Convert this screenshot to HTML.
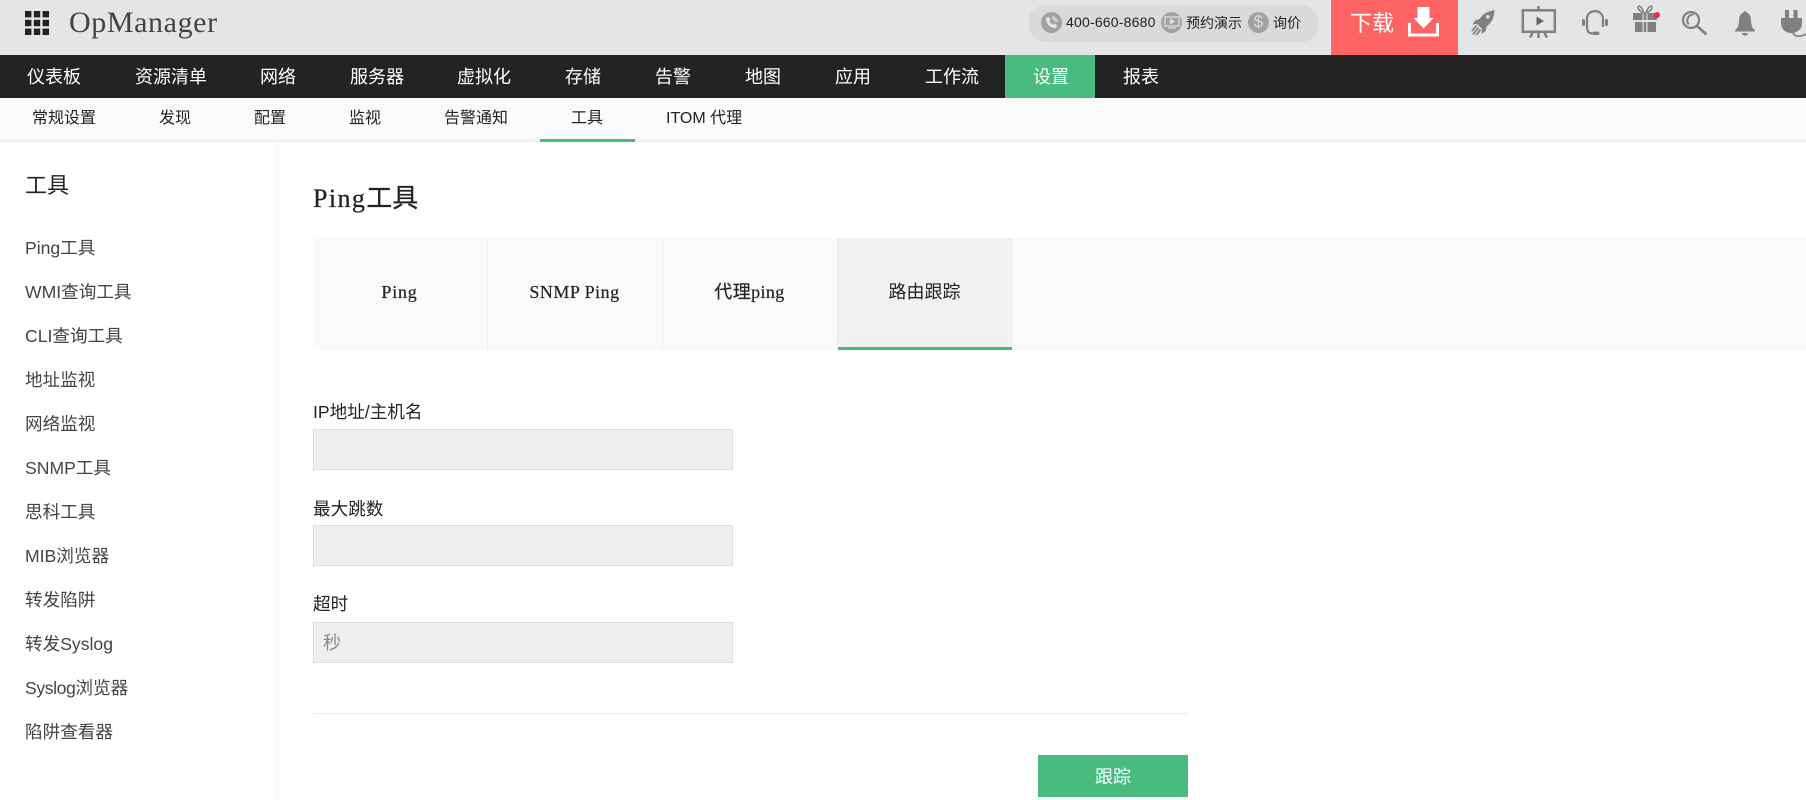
<!DOCTYPE html>
<html lang="zh">
<head>
<meta charset="utf-8">
<title>OpManager</title>
<style>
*{box-sizing:border-box}
html,body{margin:0;padding:0;width:1806px;height:800px;overflow:hidden;background:#fff}
body{position:relative;font-family:"Liberation Sans","Noto Sans CJK SC",sans-serif;color:#222}
.a{position:absolute;white-space:nowrap}
.t{position:absolute;white-space:nowrap;height:30px;line-height:30px}
.serif{font-family:"Liberation Serif","Noto Sans CJK SC",serif}
#top{position:absolute;left:0;top:0;width:1806px;height:55px;background:#e4e5e7}
#nav{position:absolute;left:0;top:55px;width:1806px;height:43px;background:#232323}
#sub{position:absolute;left:0;top:98px;width:1806px;height:44px;background:#fafafa}
#navon{position:absolute;left:1005px;top:55px;width:90px;height:43px;background:#48bb7f}
.n{color:#fff;font-size:18px;top:62px}
.s{color:#222;font-size:16px;top:104px}
.m{color:#444;font-size:17.6px;left:25px}
.l{color:#222;font-size:17.6px;left:313px}
.i{position:absolute;left:313px;width:420px;height:41px;background:#efefef;border:1px solid #ddd}
.tb{font-size:18px;color:#222;text-align:center;width:175px;top:277px;-webkit-text-stroke:.2px #222}
.c{position:absolute;width:21px;height:21px;border-radius:50%;background:#a2a2a2;top:12px}
svg{position:absolute;display:block}
</style>
</head>
<body>
<div id="top"></div>
<svg style="left:25px;top:11px" width="24" height="24" viewBox="0 0 24 24" fill="#222">
<rect x="0" y="0" width="6.4" height="6.4"/><rect x="8.8" y="0" width="6.4" height="6.4"/><rect x="17.6" y="0" width="6.4" height="6.4"/>
<rect x="0" y="8.8" width="6.4" height="6.4"/><rect x="8.8" y="8.8" width="6.4" height="6.4"/><rect x="17.6" y="8.8" width="6.4" height="6.4"/>
<rect x="0" y="17.6" width="6.4" height="6.4"/><rect x="8.8" y="17.6" width="6.4" height="6.4"/><rect x="17.6" y="17.6" width="6.4" height="6.4"/>
</svg>
<div class="t serif" style="left:69px;top:7px;font-size:30px;line-height:32px;height:32px;color:#444;letter-spacing:.6px">OpManager</div>

<div class="a" style="left:1028px;top:5px;width:291px;height:37px;border-radius:19px;background:#d9dadb"></div>
<div class="c" style="left:1041px"></div>
<svg style="left:1045px;top:16px" width="13" height="13" viewBox="0 0 13 13"><path d="M2 1.500 4.200 1 5.400 3.800 4.200 5C5 6.600 6.300 8 8 8.800L9.200 7.600 12 8.800 11.500 11C11.300 11.800 10.500 12 9.800 12 5 11.500 1.500 8 1 3.200 1 2.500 1.200 1.700 2 1.500Z" fill="#e4e4e4"/><path d="M7 2.500C8.800 2.800 10.200 4.200 10.500 6M7 .8C9.800 1 12 3.200 12.300 6" fill="none" stroke="#e4e4e4"/></svg>
<div class="t" style="left:1066px;top:7px;font-size:14px;color:#222;letter-spacing:.2px">400-660-8680</div>
<div class="c" style="left:1161px"></div>
<svg style="left:1164px;top:16px" width="16" height="13" viewBox="0 0 16 13" fill="none" stroke="#e2e2e2" stroke-width="1.200"><rect x="1" y="1" width="14" height="9"/><path d="M6.500 3.500 10 5.500 6.500 7.500Z" fill="#e2e2e2"/><path d="M4 12H12"/></svg>
<div class="t" style="left:1186px;top:8px;font-size:14px;color:#222">预约演示</div>
<div class="c" style="left:1248px;"></div>
<div class="t" style="left:1248px;top:7px;width:21px;text-align:center;font-size:17px;color:#dcdcdc">$</div>
<div class="t" style="left:1273px;top:8px;font-size:14px;color:#222">询价</div>

<div class="a" style="left:1331px;top:0;width:127px;height:55px;background:#ff6464"></div>
<div class="t" style="left:1350px;top:9px;font-size:22px;color:#fff">下载</div>
<svg style="left:1408px;top:7px" width="31" height="30" viewBox="0 0 31 30" fill="#fff"><path d="M9.500 0H21.500V11H25.500L15.500 21.500 5.500 11H9.500Z"/><path d="M0 16H3V26.500H28V16H31V29.500H0Z"/></svg>

<!-- rocket -->
<svg style="left:1470px;top:9px" width="26" height="28" viewBox="0 0 26 28" fill="#7f8082">
<path d="M24.500 1C18 2 12.500 5 9.500 10L5 11.500 2.500 15.500 7 15 12 20 11.500 25 15.500 22 17 17C21.500 14 24.500 8 24.500 1Z"/>
<circle cx="17.800" cy="7.800" r="1.800" fill="#e4e5e7"/>
<path d="M6.500 16.500 2 22M8.500 18.500 3 25.500M10.500 20.500 6.500 26" stroke="#88898b" stroke-width="2" fill="none"/>
</svg>
<!-- presentation -->
<svg style="left:1521px;top:6px" width="36" height="33" viewBox="0 0 36 33" fill="none" stroke="#808183" stroke-width="2.500">
<rect x="1.800" y="4.300" width="32" height="21.500"/>
<path d="M17.500 0V4M17.500 26V32M9 31.500 11.500 27M26 31.500 23.500 27"/>
<path d="M15.500 10.500 23 15 15.500 19.500Z" fill="#66676a" stroke="none"/>
</svg>
<!-- headset -->
<svg style="left:1582px;top:10px" width="26" height="26" viewBox="0 0 26 26" fill="none" stroke="#7f8082" stroke-width="2.200">
<path d="M5 17V9C5 -1.500 21 -1.500 21 9V17"/>
<path d="M5 17C5 21 7 23.500 10 23.500H14"/>
<rect x="0" y="9" width="3" height="7" rx="1.500" fill="#7f8082" stroke="none"/>
<rect x="23" y="9" width="3" height="7" rx="1.500" fill="#7f8082" stroke="none"/>
<rect x="10.500" y="21.500" width="7" height="3.500" rx="1.700" fill="#7f8082" stroke="none"/>
</svg>
<!-- gift -->
<svg style="left:1633px;top:5px" width="28" height="28" viewBox="0 0 28 28">
<g fill="#7f8082"><rect x="0" y="8" width="9.500" height="7"/><rect x="10.700" y="8" width="2.600" height="7"/><rect x="14.500" y="8" width="9.500" height="7"/><rect x="2" y="17" width="7.500" height="10"/><rect x="10.700" y="17" width="2.600" height="10"/><rect x="14.500" y="17" width="8.500" height="10"/></g>
<path d="M11 8C8 7 4.500 4.500 5 2 5.500 0 8.500 1 11 8ZM13 8C16 7 19.500 4.500 19 2 18.500 0 15.500 1 13 8Z" fill="none" stroke="#7f8082" stroke-width="1.500"/>
<circle cx="24" cy="10" r="3" fill="#ef2b3c"/>
</svg>
<!-- search -->
<svg style="left:1681px;top:11px" width="27" height="25" viewBox="0 0 27 25" fill="none" stroke="#7f8082">
<circle cx="10" cy="9" r="8" stroke-width="2.200"/>
<path d="M12.500 3.500C7.500 3.500 4.500 8.500 7.500 13.500" stroke-width="2"/>
<path d="M16 15 25.500 23.500" stroke-width="2.800"/>
</svg>
<!-- bell -->
<svg style="left:1735px;top:11px" width="20" height="25" viewBox="0 0 20 25" fill="#7f8082">
<circle cx="10" cy="2" r="1.800"/>
<path d="M10 1.500C14.500 1.500 16 5.500 16 9.500 16 14.500 17.500 17 20 19.500V20.500H0V19.500C2.500 17 4 14.500 4 9.500 4 5.500 5.500 1.500 10 1.500Z"/>
<path d="M7 22H13C13 25.500 7 25.500 7 22Z"/>
</svg>
<!-- plug -->
<svg style="left:1781px;top:9px" width="25" height="29" viewBox="0 0 25 29" fill="#7f8082">
<rect x="4" y="1" width="4" height="8"/><rect x="12.500" y="1" width="4" height="8"/>
<path d="M0 9H21V14C21 20 16.500 24 10.500 24 4.500 24 0 20 0 14Z"/>
<path d="M12 24C14 28 19 28 25 25" fill="none" stroke="#7f8082" stroke-width="1.800"/>
</svg>

<div id="nav"></div>
<div id="navon"></div>
<div class="t n" style="left:27px">仪表板</div>
<div class="t n" style="left:135px">资源清单</div>
<div class="t n" style="left:260px">网络</div>
<div class="t n" style="left:350px">服务器</div>
<div class="t n" style="left:457px">虚拟化</div>
<div class="t n" style="left:565px">存储</div>
<div class="t n" style="left:655px">告警</div>
<div class="t n" style="left:745px">地图</div>
<div class="t n" style="left:835px">应用</div>
<div class="t n" style="left:925px">工作流</div>
<div class="t n" style="left:1033px">设置</div>
<div class="t n" style="left:1123px">报表</div>

<div id="sub"></div>
<div class="a" style="left:0;top:138px;width:1806px;height:4px;background:linear-gradient(#fafafa,#eee)"></div>
<div class="t s" style="left:32px">常规设置</div>
<div class="t s" style="left:159px">发现</div>
<div class="t s" style="left:254px">配置</div>
<div class="t s" style="left:349px">监视</div>
<div class="t s" style="left:444px">告警通知</div>
<div class="t s" style="left:571px">工具</div>
<div class="t s" style="left:666px">ITOM 代理</div>
<div class="a" style="left:540px;top:139px;width:95px;height:3px;background:#48bb7f"></div>

<div class="a" style="left:275px;top:142px;width:7px;height:658px;background:linear-gradient(90deg,#f7f7f7,#fff)"></div>
<div class="t" style="left:25px;top:171px;font-size:22px;color:#222">工具</div>
<div class="t m" style="top:233px">Ping工具</div>
<div class="t m" style="top:277px">WMI查询工具</div>
<div class="t m" style="top:321px">CLI查询工具</div>
<div class="t m" style="top:365px">地址监视</div>
<div class="t m" style="top:409px">网络监视</div>
<div class="t m" style="top:453px">SNMP工具</div>
<div class="t m" style="top:497px">思科工具</div>
<div class="t m" style="top:541px">MIB浏览器</div>
<div class="t m" style="top:585px">转发陷阱</div>
<div class="t m" style="top:629px">转发Syslog</div>
<div class="t m" style="top:673px;"><span style="letter-spacing:-.4px">Syslog</span>浏览器</div>
<div class="t m" style="top:717px">陷阱查看器</div>

<div class="t serif" style="left:313px;top:184px;font-size:26px;color:#222;-webkit-text-stroke:.25px #222"><span style="letter-spacing:1.400px">Ping</span>工具</div>

<div class="a" style="left:313px;top:238px;width:1493px;height:112px;background:#fafafa"></div>
<div class="a" style="left:487px;top:238px;width:1px;height:112px;background:#eee"></div>
<div class="a" style="left:662px;top:238px;width:1px;height:112px;background:#eee"></div>
<div class="a" style="left:837px;top:238px;width:175px;height:112px;background:#f1f1f1;border-left:1px solid #eaeaea;border-right:1px solid #eaeaea"></div>
<div class="a" style="left:838px;top:347px;width:174px;height:3px;background:#48bb7f"></div>
<div class="t serif tb" style="left:312px;letter-spacing:.8px">Ping</div>
<div class="t serif tb" style="left:487px;letter-spacing:.5px">SNMP Ping</div>
<div class="t serif tb" style="left:662px;letter-spacing:.4px">代理ping</div>
<div class="t serif tb" style="left:837px;-webkit-text-stroke:0">路由跟踪</div>

<div class="t l" style="top:397px">IP地址/主机名</div>
<div class="i" style="top:429px"></div>
<div class="t l" style="top:494px">最大跳数</div>
<div class="i" style="top:525px"></div>
<div class="t l" style="top:589px">超时</div>
<div class="i" style="top:622px"></div>
<div class="t" style="left:323px;top:628px;font-size:18px;color:#8a8a8a">秒</div>

<div class="a" style="left:313px;top:713px;width:875px;height:1px;background:#eee"></div>
<div class="a" style="left:1038px;top:755px;width:150px;height:42px;background:#48bb7f"></div>
<div class="t" style="left:1038px;top:762px;width:150px;text-align:center;font-size:18px;color:#fff">跟踪</div>
</body>
</html>
